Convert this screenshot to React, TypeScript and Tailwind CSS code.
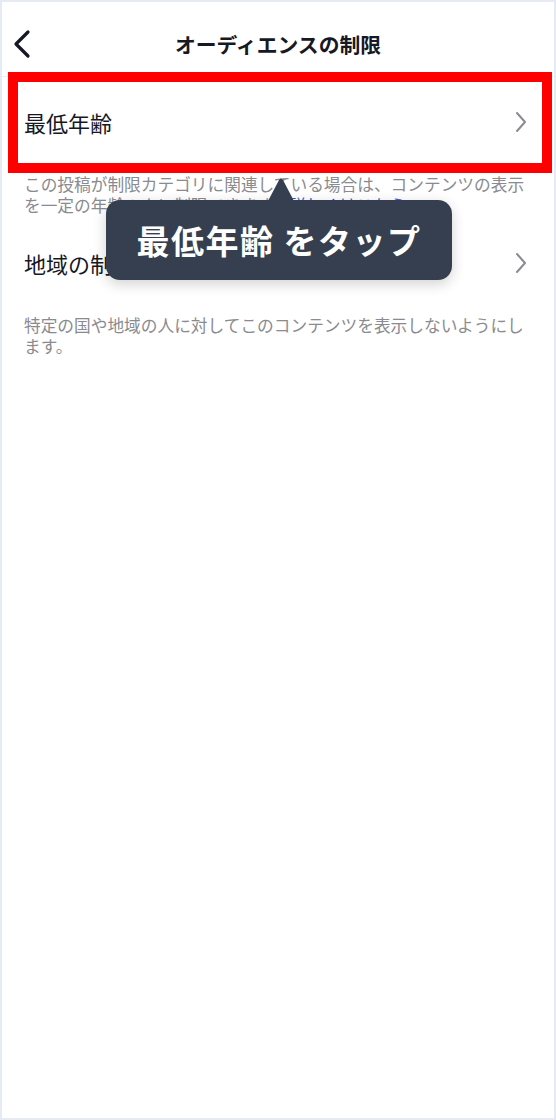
import React from "react";

const font = { fontFamily: '"Noto Sans CJK JP", "Noto Sans", sans-serif' };

function ChevronRight() {
  return (
    <svg width="14" height="24" viewBox="0 0 14 24" fill="none">
      <path d="M3 3 L11 12 L3 21" stroke="#8a8b91" strokeWidth="2" strokeLinecap="round" strokeLinejoin="round" />
    </svg>
  );
}

export default function App() {
  return (
    <div className="w-[556px] h-[1120px] bg-[#e6eaf2] p-[2px]" style={font}>
      <div className="relative w-full h-full bg-white overflow-hidden">
        {/* Header */}
        <div className="h-[75px] flex items-center border-b border-[#efefef] px-[10px] pt-[10px]">
          <div className="w-[40px] flex items-center">
            <svg width="22" height="30" viewBox="0 0 22 30" fill="none">
              <path d="M16 3 L4 15 L16 27" stroke="#161823" strokeWidth="3.2" strokeLinecap="round" strokeLinejoin="round" />
            </svg>
          </div>
          <div className="flex-1 text-center text-[20.8px] font-bold text-[#161823] leading-none pr-[40px]">
            オーディエンスの制限
          </div>
        </div>

        {/* Row 1 */}
        <div className="h-[89px] flex items-center justify-between pl-[22px] pr-[26px]">
          <span className="text-[22px] text-[#161823] leading-none">最低年齢</span>
          <ChevronRight />
        </div>
        <div className="pl-[22px] pr-[20px] pt-[8px] text-[16.7px] leading-[21px] text-[#8a8b91]">
          この投稿が制限カテゴリに関連している場合は、コンテンツの表示を一定の年齢の人に制限できます。
          <span className="text-[#3b5bdb]">詳しくはこちら</span>
        </div>

        {/* Row 2 */}
        <div className="h-[90px] flex items-center justify-between pl-[22px] pr-[26px] mt-[2px]">
          <span className="text-[22px] text-[#161823] leading-none">地域の制限</span>
          <ChevronRight />
        </div>
        <div className="pl-[22px] pr-[20px] pt-[7px] text-[16.7px] leading-[21px] text-[#8a8b91]">
          特定の国や地域の人に対してこのコンテンツを表示しないようにします。
        </div>

        {/* Highlight box */}
        <div className="absolute left-[6px] top-[70px] w-[544px] h-[101px] border-[10px] border-[#ff0000]" />

        {/* Tooltip */}
        <div className="absolute left-[104px] top-[176px] w-[346px]">
          <svg className="absolute left-[160px] top-0" width="30" height="25" viewBox="0 0 30 25">
            <path d="M1 25 L13 2 Q15 -1 17 2 L29 25 Z" fill="#353f4f" />
          </svg>
          <div className="mt-[22px] h-[80px] rounded-[14px] bg-[#353f4f] shadow-[0_4px_14px_rgba(0,0,0,0.18)] flex items-center justify-center">
            <span className="text-white text-[33px] font-bold leading-none tracking-[1.5px]">最低年齢 をタップ</span>
          </div>
        </div>
      </div>
    </div>
  );
}
